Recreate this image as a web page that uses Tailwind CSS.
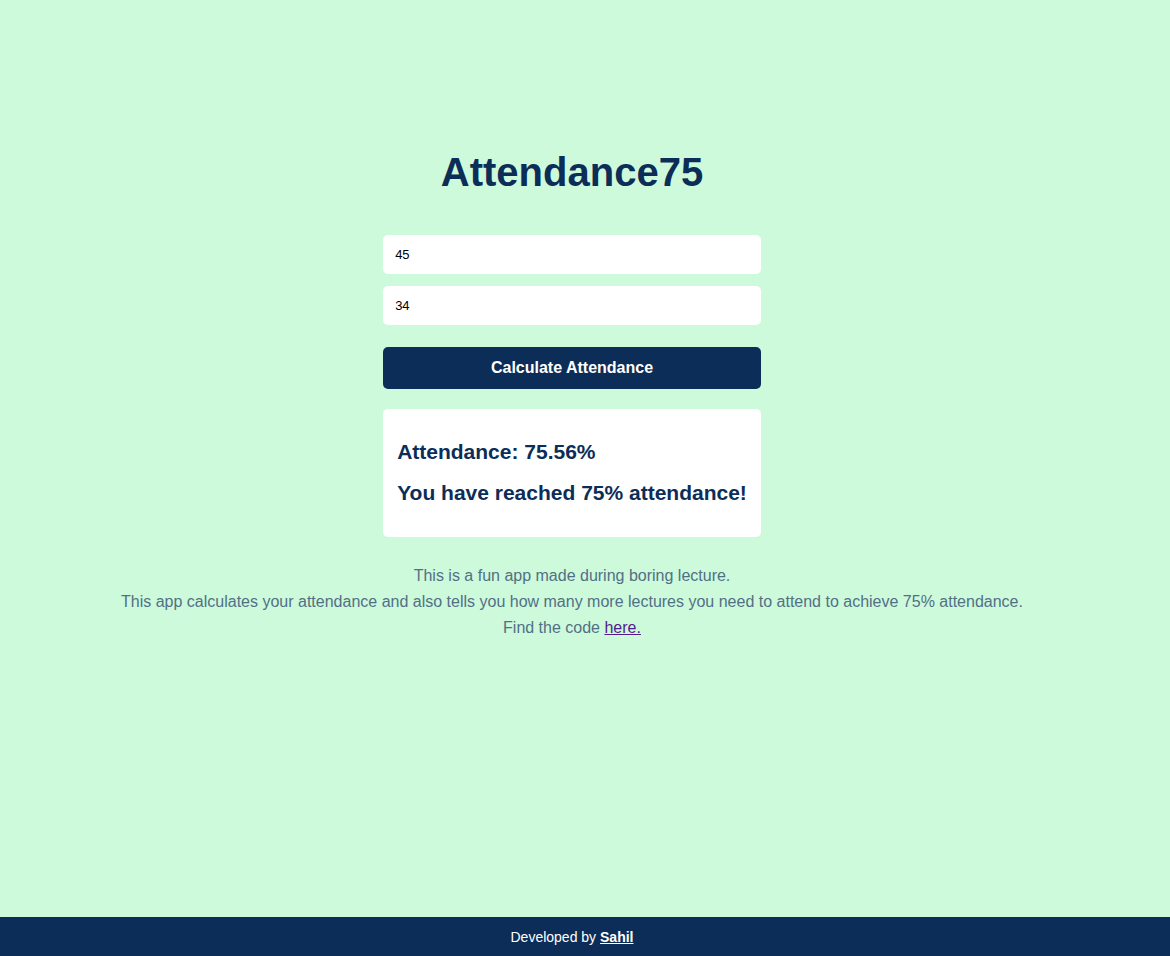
<!DOCTYPE html>
<html lang="en">
<head>
<meta charset="utf-8">
<meta name="viewport" content="width=device-width, initial-scale=1">
<title>Attendance75</title>
<script src="https://cdn.jsdelivr.net/npm/@tailwindcss/browser@4"></script>
</head>
<body class="flex min-h-screen flex-col bg-[#cdfadb] font-['Liberation_Sans',Arial,sans-serif] text-[#0c2d57]">
<main class="flex grow flex-col items-center pt-[148px] pr-[26px]">
  <h1 class="text-[40px] leading-12 font-bold">Attendance75</h1>
  <form class="mt-[39px] flex flex-col">
    <input type="text" aria-label="Total lectures" value="45" class="h-[39px] rounded-[5px] bg-white px-3 text-[13px] text-black">
    <input type="text" aria-label="Attended lectures" value="34" class="mt-3 h-[39px] rounded-[5px] bg-white px-3 text-[13px] text-black">
    <button type="button" class="mt-[22px] h-[42px] rounded-[5px] bg-[#0c2d57] text-base font-bold text-white">Calculate Attendance</button>
    <output class="mt-5 flex flex-col gap-4 rounded-[5px] bg-white px-[14px] pt-[30px] pb-8 text-[21px] leading-[25px] font-bold">
      <p>Attendance: 75.56%</p>
      <p>You have reached 75% attendance!</p>
    </output>
  </form>
  <div class="mt-[26px] text-center text-base leading-[26px] text-[#527085]">
    <p>This is a fun app made during boring lecture.</p>
    <p>This app calculates your attendance and also tells you how many more lectures you need to attend to achieve 75% attendance.</p>
    <p>Find the code <a href="#" class="text-[#551a8b] underline">here.</a></p>
  </div>
</main>
<footer class="bg-[#0c2d57] pt-3 pr-[26px] pb-[11px] text-center text-sm leading-4 text-white">Developed by <a href="#" class="font-bold underline">Sahil</a></footer>
</body>
</html>
